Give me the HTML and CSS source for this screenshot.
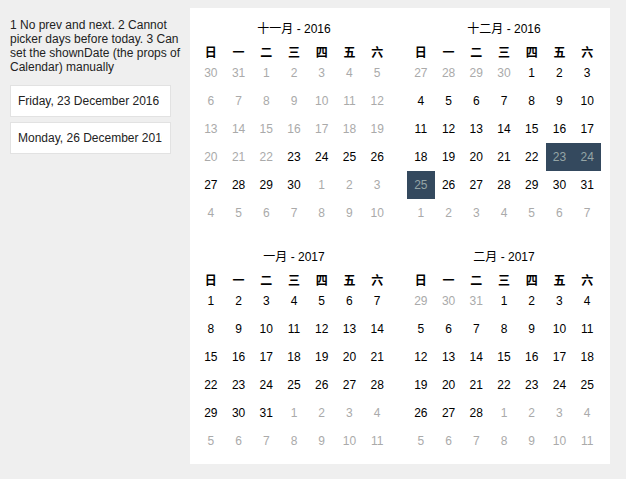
FILE: index.html
```html
<!DOCTYPE html>
<html>
<head>
<meta charset="utf-8">
<link rel="stylesheet" href="styles.css">
</head>
<body>
<div class="page">
  <div class="side">
    <p class="note">1 No prev and next. 2 Cannot picker days before today. 3 Can set the shownDate (the props of Calendar) manually</p>
    <div class="field"><span class="field-text">Friday, 23 December 2016</span></div>
    <div class="field"><span class="field-text">Monday, 26 December 2016</span></div>
  </div>
  <div class="panel">
    <div class="cal">
      <div class="month">十一月 - 2016</div>
      <div class="week"><span>日</span><span>一</span><span>二</span><span>三</span><span>四</span><span>五</span><span>六</span></div>
      <div class="days">
        <span class="off">30</span><span class="off">31</span><span class="off">1</span><span class="off">2</span><span class="off">3</span><span class="off">4</span><span class="off">5</span>
        <span class="off">6</span><span class="off">7</span><span class="off">8</span><span class="off">9</span><span class="off">10</span><span class="off">11</span><span class="off">12</span>
        <span class="off">13</span><span class="off">14</span><span class="off">15</span><span class="off">16</span><span class="off">17</span><span class="off">18</span><span class="off">19</span>
        <span class="off">20</span><span class="off">21</span><span class="off">22</span><span>23</span><span>24</span><span>25</span><span>26</span>
        <span>27</span><span>28</span><span>29</span><span>30</span><span class="off">1</span><span class="off">2</span><span class="off">3</span>
        <span class="off">4</span><span class="off">5</span><span class="off">6</span><span class="off">7</span><span class="off">8</span><span class="off">9</span><span class="off">10</span>
      </div>
    </div>
    <div class="cal">
      <div class="month">十二月 - 2016</div>
      <div class="week"><span>日</span><span>一</span><span>二</span><span>三</span><span>四</span><span>五</span><span>六</span></div>
      <div class="days">
        <span class="off">27</span><span class="off">28</span><span class="off">29</span><span class="off">30</span><span>1</span><span>2</span><span>3</span>
        <span>4</span><span>5</span><span>6</span><span>7</span><span>8</span><span>9</span><span>10</span>
        <span>11</span><span>12</span><span>13</span><span>14</span><span>15</span><span>16</span><span>17</span>
        <span>18</span><span>19</span><span>20</span><span>21</span><span>22</span><span class="sel">23</span><span class="sel">24</span>
        <span class="sel">25</span><span>26</span><span>27</span><span>28</span><span>29</span><span>30</span><span>31</span>
        <span class="off">1</span><span class="off">2</span><span class="off">3</span><span class="off">4</span><span class="off">5</span><span class="off">6</span><span class="off">7</span>
      </div>
    </div>
    <div class="cal">
      <div class="month">一月 - 2017</div>
      <div class="week"><span>日</span><span>一</span><span>二</span><span>三</span><span>四</span><span>五</span><span>六</span></div>
      <div class="days">
        <span>1</span><span>2</span><span>3</span><span>4</span><span>5</span><span>6</span><span>7</span>
        <span>8</span><span>9</span><span>10</span><span>11</span><span>12</span><span>13</span><span>14</span>
        <span>15</span><span>16</span><span>17</span><span>18</span><span>19</span><span>20</span><span>21</span>
        <span>22</span><span>23</span><span>24</span><span>25</span><span>26</span><span>27</span><span>28</span>
        <span>29</span><span>30</span><span>31</span><span class="off">1</span><span class="off">2</span><span class="off">3</span><span class="off">4</span>
        <span class="off">5</span><span class="off">6</span><span class="off">7</span><span class="off">8</span><span class="off">9</span><span class="off">10</span><span class="off">11</span>
      </div>
    </div>
    <div class="cal">
      <div class="month">二月 - 2017</div>
      <div class="week"><span>日</span><span>一</span><span>二</span><span>三</span><span>四</span><span>五</span><span>六</span></div>
      <div class="days">
        <span class="off">29</span><span class="off">30</span><span class="off">31</span><span>1</span><span>2</span><span>3</span><span>4</span>
        <span>5</span><span>6</span><span>7</span><span>8</span><span>9</span><span>10</span><span>11</span>
        <span>12</span><span>13</span><span>14</span><span>15</span><span>16</span><span>17</span><span>18</span>
        <span>19</span><span>20</span><span>21</span><span>22</span><span>23</span><span>24</span><span>25</span>
        <span>26</span><span>27</span><span>28</span><span class="off">1</span><span class="off">2</span><span class="off">3</span><span class="off">4</span>
        <span class="off">5</span><span class="off">6</span><span class="off">7</span><span class="off">8</span><span class="off">9</span><span class="off">10</span><span class="off">11</span>
      </div>
    </div>
  </div>
</div>
</body>
</html>
```

FILE: styles.css
```css
html, body {
  margin: 0;
  padding: 0;
  background: #efefef;
}

body {
  font-family: "Liberation Sans", Arial, "Noto Sans CJK SC", sans-serif;
  font-size: 12px;
  color: #000;
}

.page {
  display: flex;
  align-items: flex-start;
  padding: 8px 0 0 10px;
}

.side {
  width: 180px;
  display: flex;
  flex-direction: column;
  padding-top: 10px;
}

.note {
  margin: 0 0 11px 0;
  line-height: 14px;
  color: #222;
}

.field {
  box-sizing: border-box;
  width: 161px;
  height: 32px;
  margin: 0 0 5px 0;
  padding: 0 8px 0 7px;
  border: 1px solid #e2e2e2;
  background: #fff;
  display: flex;
  align-items: center;
}

.field-text {
  display: block;
  width: 100%;
  overflow: hidden;
  white-space: nowrap;
  line-height: 16px;
  font-size: 12px;
  color: #222;
}

.panel {
  width: 420px;
  background: #fff;
  display: flex;
  flex-wrap: wrap;
}

.cal {
  width: 210px;
  box-sizing: border-box;
  padding: 11px 9px 9px 7px;
}

.month {
  text-align: center;
  line-height: 20px;
}

.week {
  display: grid;
  grid-template-columns: repeat(7, 1fr);
  margin-top: 5px;
  line-height: 15px;
  font-family: "Noto Sans CJK SC", sans-serif;
  font-weight: bold;
  text-align: center;
}

.days {
  display: grid;
  grid-template-columns: repeat(7, 1fr);
  grid-auto-rows: 28px;
  text-align: center;
  line-height: 28px;
}

.days span {
  color: #000;
}

.days .off {
  color: #aaa;
}

.days .sel {
  background: #34495e;
  color: #95a5a6;
}
```
